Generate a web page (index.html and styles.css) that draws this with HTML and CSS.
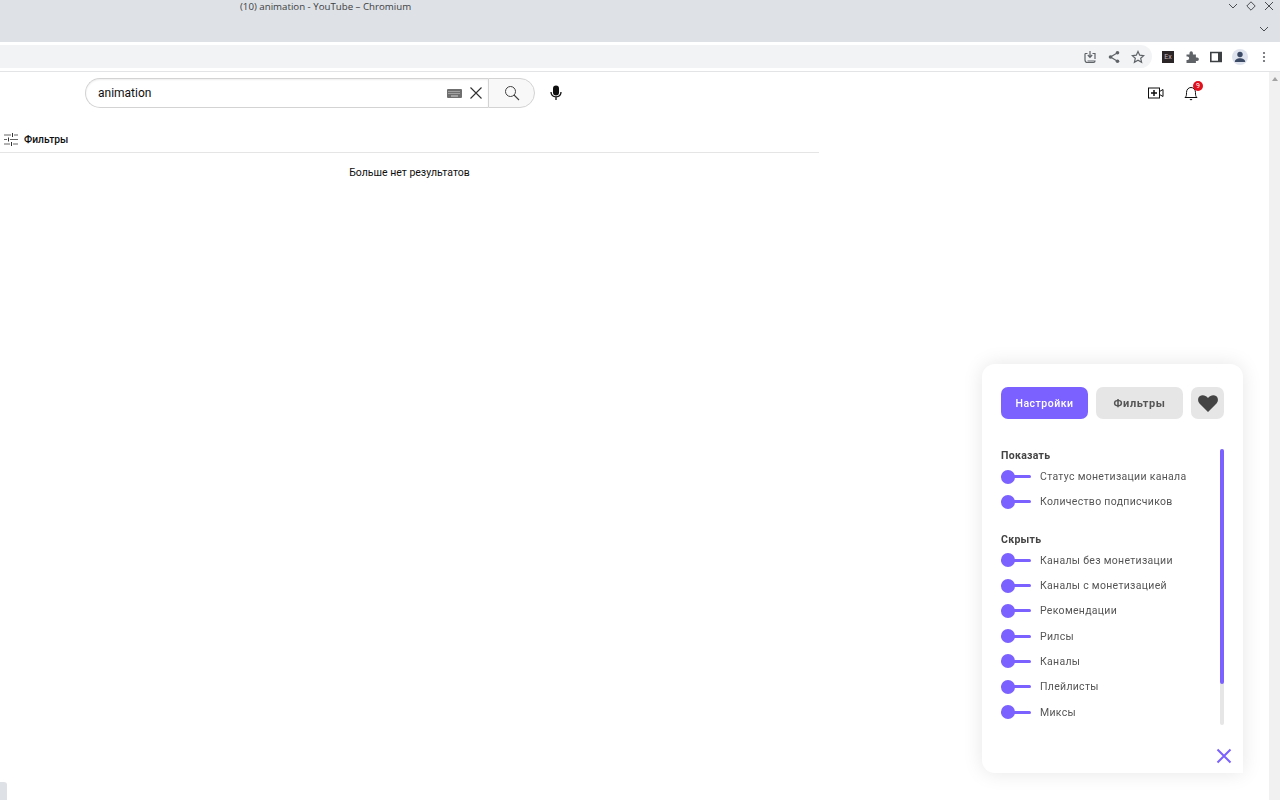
FILE: index.html
```html
<!DOCTYPE html>
<html lang="ru">
<head>
    <meta charset="UTF-8">
    <title>(10) animation - YouTube – Chromium</title>
    <link rel="stylesheet" href="styles.css">
</head>
<body>

    <!-- window frame -->
    <div class="titlebar">
        <div class="title-row">
            <span class="window-title">(10) animation - YouTube – Chromium</span>
            <div class="window-btns">
                <svg width="10" height="10" viewBox="0 0 10 10"><path d="M1 3l4 4 4-4" class="win-stroke"/></svg>
                <svg width="10" height="10" viewBox="0 0 10 10"><path d="M5 .8L9.200 5 5 9.200.8 5z" class="win-stroke"/></svg>
                <svg width="10" height="10" viewBox="0 0 10 10"><path d="M1 1l8 8M9 1l-8 8" class="win-stroke"/></svg>
            </div>
        </div>
        <div class="tab-row">
            <svg width="10" height="10" viewBox="0 0 10 10"><path d="M1 3l4 4 4-4" class="win-stroke"/></svg>
        </div>
    </div>

    <!-- browser toolbar -->
    <div class="toolbar">
        <div class="omnibox">
            <svg class="tool-icon" width="14" height="14" viewBox="0 0 14 14">
                <path d="M2 3.500h2.500M9.500 3.500H12V9" class="tool-stroke"/>
                <path d="M2 3.500V10c0 1.500 1 2.500 2.500 2.500h6c1 0 1.500-.5 1.500-1.500H4.500" class="tool-stroke"/>
                <path d="M7 1v6M4.800 5L7 7.300 9.200 5" class="tool-stroke"/>
            </svg>
            <svg class="tool-icon" width="14" height="14" viewBox="0 0 14 14">
                <circle cx="10.500" cy="2.800" r="1.800" fill="#5f6368"/>
                <circle cx="3.500" cy="7" r="1.800" fill="#5f6368"/>
                <circle cx="10.500" cy="11.200" r="1.800" fill="#5f6368"/>
                <path d="M10.500 2.800L3.500 7l7 4.200" class="tool-stroke"/>
            </svg>
            <svg class="tool-icon" width="14" height="14" viewBox="0 0 14 14">
                <path d="M7 1.500l1.700 3.700 4 .4-3 2.700.9 4L7 10.300l-3.600 2 .9-4-3-2.700 4-.4z" class="tool-stroke"/>
            </svg>
        </div>
        <div class="toolbar-right">
            <span class="ext-badge">Ex</span>
            <svg width="14" height="14" viewBox="0 0 14 14">
                <path d="M1.500 4.500h3V3a1.700 1.700 0 013.400 0v1.500h3v3h1.300a1.700 1.700 0 010 3.400h-1.300v2.100H1.500v-3h1a1.700 1.700 0 000-3.400h-1z" fill="#5f6368"/>
            </svg>
            <svg width="12" height="12" viewBox="0 0 12 12">
                <path d="M.8 1.500h10.400v9H.8z" fill="none" stroke="#3c4043" stroke-width="1.600"/>
                <rect x="8" y="1.500" width="3" height="9" fill="#3c4043"/>
            </svg>
            <span class="avatar">
                <svg width="12" height="12" viewBox="0 0 12 12">
                    <circle cx="6" cy="3.500" r="2.700" fill="#3c4a66"/>
                    <path d="M.8 11c0-2.500 2.500-3.700 5.200-3.700s5.200 1.200 5.200 3.700z" fill="#3c4a66"/>
                </svg>
            </span>
            <svg width="4" height="12" viewBox="0 0 4 12">
                <circle cx="2" cy="2" r="1.100" fill="#5f6368"/>
                <circle cx="2" cy="6" r="1.100" fill="#5f6368"/>
                <circle cx="2" cy="10" r="1.100" fill="#5f6368"/>
            </svg>
        </div>
    </div>

    <div class="viewport">
        <div class="page">
            <!-- site header -->
            <div class="masthead">
                <div class="searchbox">
                    <span class="search-text">animation</span>
                    <svg class="kbd-icon" width="15" height="9" viewBox="0 0 15 9">
                        <rect width="15" height="9" rx="1" fill="#6f6f6f"/>
                        <path d="M1.500 2.500h12M1.500 4.500h12" stroke="#d4d4d4" stroke-width="1" stroke-dasharray="1 1"/>
                        <path d="M4 7h7" stroke="#d4d4d4" stroke-width="1"/>
                    </svg>
                    <svg class="clear-icon" width="14" height="14" viewBox="0 0 14 14">
                        <path d="M1.500 1.500l11 11M12.500 1.500l-11 11" fill="none" stroke="#303030" stroke-width="1.100"/>
                    </svg>
                </div>
                <button class="search-btn">
                    <svg width="16" height="16" viewBox="0 0 16 16">
                        <circle cx="6.500" cy="6.500" r="5" fill="none" stroke="#404040" stroke-width="1"/>
                        <path d="M10 10l5 5" stroke="#404040" stroke-width="1.100"/>
                    </svg>
                </button>
                <svg class="mic-icon" width="12" height="16" viewBox="0 0 12 16">
                    <rect x="3" y="0.500" width="6" height="10" rx="3" fill="#0f0f0f"/>
                    <path d="M1 7c0 3 2 4.800 5 4.800S11 10 11 7M6 12v3" fill="none" stroke="#0f0f0f" stroke-width="1.300"/>
                </svg>
                <div class="masthead-right">
                    <svg width="16" height="12" viewBox="0 0 16 12">
                        <rect x="0.500" y="1" width="11" height="10" fill="none" stroke="#0f0f0f" stroke-width="1"/>
                        <path d="M3 6h6M6 3v6" stroke="#0f0f0f" stroke-width="1.500"/>
                        <path d="M11.500 4.500L15 2.500v7l-3.500-2" fill="none" stroke="#0f0f0f" stroke-width="1"/>
                    </svg>
                    <span class="bell">
                        <svg width="14" height="16" viewBox="0 0 14 16">
                            <path d="M1 12.500c1.500-1.200 1.500-2.500 1.500-5C2.500 4.500 4.500 2.500 7 2.500s4.500 2 4.500 5c0 2.500 0 3.800 1.500 5z" fill="none" stroke="#0f0f0f" stroke-width="1"/>
                            <path d="M5.500 14h3L7 15.500z" fill="#0f0f0f"/>
                        </svg>
                        <span class="bell-badge">9</span>
                    </span>
                </div>
            </div>

            <!-- results -->
            <div class="results">
                <div class="filter-bar">
                    <svg width="14" height="13" viewBox="0 0 14 13">
                        <path d="M0 2h7M10 2h4M0 6.500h3M6 6.500h8M0 11h6M9 11h5" stroke="#666" stroke-width="1.200"/>
                        <path d="M8.500 0v4M4.500 4.500v4M7.500 9v4" stroke="#333" stroke-width="1"/>
                    </svg>
                    <span>Фильтры</span>
                </div>
                <p class="no-results">Больше нет результатов</p>
            </div>
        </div>
        <div class="scrollbar"><span class="scroll-arrow"></span></div>
    </div>

    <!-- small tab stuck to the bottom corner -->
    <div class="corner-tab"></div>

    <!-- extension popup -->
    <div class="panel">
        <div class="panel-tabs">
            <button class="tab tab-active">Настройки</button>
            <button class="tab">Фильтры</button>
            <button class="tab tab-heart">
                <svg width="20" height="17" viewBox="0 0 20 17">
                    <path d="M10 17L1.500 8.500C-.5 6.300-.3 3 1.600 1.300 3.800-.6 7.500-.3 10 3c2.500-3.300 6.200-3.600 8.400-1.700 1.900 1.700 2.100 5 .1 7.200z" fill="#444"/>
                </svg>
            </button>
        </div>

        <div class="panel-body">
            <div class="options">
                <h4 class="group-title">Показать</h4>
                <label class="option"><span class="toggle"></span>Статус монетизации канала</label>
                <label class="option"><span class="toggle"></span>Количество подписчиков</label>

                <h4 class="group-title group-second">Скрыть</h4>
                <label class="option"><span class="toggle"></span>Каналы без монетизации</label>
                <label class="option"><span class="toggle"></span>Каналы с монетизацией</label>
                <label class="option"><span class="toggle"></span>Рекомендации</label>
                <label class="option"><span class="toggle"></span>Рилсы</label>
                <label class="option"><span class="toggle"></span>Каналы</label>
                <label class="option"><span class="toggle"></span>Плейлисты</label>
                <label class="option"><span class="toggle"></span>Миксы</label>
            </div>
            <div class="panel-scroll"><span class="panel-thumb"></span></div>
        </div>

        <div class="panel-footer">
            <svg width="16" height="16" viewBox="0 0 16 16">
                <path d="M1.500 1.500l13 13M14.500 1.500l-13 13" fill="none" stroke="#7b61ff" stroke-width="2"/>
            </svg>
        </div>
    </div>

</body>
</html>
```

FILE: styles.css
```css
* {
    box-sizing: border-box;
}

html, body {
    height: 100%;
}

body {
    margin: 0;
    display: flex;
    flex-direction: column;
    overflow: hidden;
    background-color: #fff;
    font-family: Roboto, "Liberation Sans", sans-serif;
}

/* window frame */
.titlebar {
    height: 42px;
    background-color: #dee1e6;
    flex-shrink: 0;
}

.title-row {
    height: 12px;
    display: flex;
    justify-content: space-between;
    align-items: center;
    padding-left: 240px;
}

.window-title {
    font-family: "Open Sans", sans-serif;
    font-size: 9.700px;
    color: #3c4043;
}

.window-btns {
    display: flex;
    gap: 8px;
    padding-right: 6px;
}

.win-stroke {
    fill: none;
    stroke: #4a4d52;
    stroke-width: 1;
}

.tab-row {
    display: flex;
    justify-content: flex-end;
    padding: 12px 11px 0 0;
}

/* browser toolbar */
.toolbar {
    height: 30px;
    flex-shrink: 0;
    background-color: #fff;
    border-bottom: 1px solid #e3e4e6;
    display: flex;
    align-items: flex-start;
    padding-top: 3px;
}

.omnibox {
    width: 1152px;
    height: 23px;
    background-color: #f1f3f4;
    border-radius: 0 12px 12px 0;
    display: flex;
    justify-content: flex-end;
    align-items: center;
    gap: 10px;
    padding-right: 7px;
}

.tool-stroke {
    fill: none;
    stroke: #5f6368;
    stroke-width: 1.200;
}

.toolbar-right {
    display: grid;
    grid-auto-flow: column;
    grid-auto-columns: 24px;
    justify-items: center;
    align-items: center;
    height: 23px;
    padding-left: 4px;
}

.ext-badge {
    width: 12px;
    height: 12px;
    background-color: #2b2527;
    color: #c9b8b8;
    font-size: 7px;
    line-height: 12px;
    text-align: center;
}

.avatar {
    width: 16px;
    height: 16px;
    border-radius: 50%;
    background-color: #dfe3ed;
    display: flex;
    align-items: center;
    justify-content: center;
}

/* page area */
.viewport {
    flex: 1;
    display: flex;
    min-height: 0;
}

.page {
    flex: 1;
    background-color: #fff;
}

.scrollbar {
    width: 11px;
    background-color: #f1f1f1;
    display: flex;
    justify-content: center;
    padding-top: 5px;
}

.scroll-arrow {
    width: 0;
    height: 0;
    border-left: 3.500px solid transparent;
    border-right: 3.500px solid transparent;
    border-bottom: 4px solid #a3a3a3;
}

.masthead {
    display: flex;
    align-items: center;
    height: 42px;
    padding: 0 0 0 85px;
}

.searchbox {
    width: 403px;
    height: 30px;
    border: 1px solid #d3d3d3;
    border-right: none;
    border-radius: 15px 0 0 15px;
    display: flex;
    align-items: center;
    padding: 0 5px 0 12px;
    box-shadow: inset 0 1px 2px #eee;
}

.search-text {
    flex: 1;
    font-size: 12px;
    color: #0f0f0f;
}

.kbd-icon {
    margin-right: 7px;
}

.search-btn {
    width: 47px;
    height: 30px;
    background-color: #f8f8f8;
    border: 1px solid #d3d3d3;
    border-radius: 0 15px 15px 0;
    display: flex;
    align-items: center;
    justify-content: center;
    padding: 0;
}

.mic-icon {
    margin-left: 15px;
}

.masthead-right {
    margin-left: auto;
    display: flex;
    align-items: center;
    gap: 20px;
    padding-right: 71px;
}

.bell {
    position: relative;
    display: flex;
}

.bell-badge {
    position: absolute;
    top: -4px;
    left: 9px;
    width: 10px;
    height: 10px;
    border-radius: 50%;
    background-color: #e0101c;
    color: #fff;
    font-size: 7px;
    line-height: 10px;
    text-align: center;
}

.results {
    width: 819px;
    padding-top: 15px;
}

.filter-bar {
    height: 24px;
    display: flex;
    align-items: center;
    gap: 6px;
    padding-left: 4px;
    font-size: 10.300px;
    font-weight: 500;
    color: #0f0f0f;
    border-bottom: 1px solid #e5e5e5;
    padding-bottom: 3px;
}

.no-results {
    margin: 13px 0 0;
    text-align: center;
    font-size: 10.500px;
    color: #0f0f0f;
}

.corner-tab {
    position: fixed;
    left: 0;
    bottom: 0;
    width: 7px;
    height: 18px;
    background-color: #dee1e6;
    border-radius: 0 3px 0 0;
}

/* popup */
.panel {
    position: fixed;
    left: 982px;
    top: 364px;
    width: 261px;
    height: 409px;
    background-color: #fff;
    border-radius: 13px 13px 0 13px;
    box-shadow: 0 0 20px rgba(0,0,0,0.1);
    padding: 23px 19px 0;
    display: flex;
    flex-direction: column;
}

.panel-tabs {
    display: flex;
    gap: 8px;
}

.tab {
    width: 87px;
    height: 32px;
    border: none;
    border-radius: 7px;
    background-color: #e6e6e6;
    color: #555;
    font-family: Roboto, sans-serif;
    font-size: 11px;
    font-weight: 700;
    letter-spacing: 0.6px;
    padding: 0;
}

.tab-active {
    background-color: #7b61ff;
    color: #fff;
    font-size: 10.500px;
    font-weight: 500;
    letter-spacing: 0.5px;
}

.tab-heart {
    width: 33px;
    display: flex;
    align-items: center;
    justify-content: center;
}

.panel-body {
    display: flex;
    justify-content: space-between;
    margin-top: 30px;
}

.options {
    padding-top: 1px;
}

.group-title {
    margin: 0;
    height: 12px;
    font-size: 10.500px;
    line-height: 12px;
    font-weight: 700;
    color: #444;
    letter-spacing: 0.3px;
}

.group-second {
    margin: 19px 0 2px;
}

.option {
    display: flex;
    align-items: center;
    gap: 9px;
    height: 25.300px;
    font-size: 10.500px;
    color: #555;
    letter-spacing: 0.3px;
}

.option:nth-of-type(1) {
    margin-top: 2px;
}

.toggle {
    position: relative;
    width: 30px;
    height: 3px;
    background-color: #7b61ff;
    border-radius: 2px;
}

.toggle::before {
    content: "";
    position: absolute;
    left: 0;
    top: -5.500px;
    width: 14px;
    height: 14px;
    border-radius: 50%;
    background-color: #7b61ff;
}

.panel-scroll {
    width: 4px;
    height: 276px;
    background-color: #e6e6e6;
    border-radius: 2px;
}

.panel-thumb {
    display: block;
    height: 235px;
    background-color: #7b61ff;
    border-radius: 2px;
}

.panel-footer {
    display: flex;
    justify-content: flex-end;
    margin: 23px -8px 0 0;
}
```
